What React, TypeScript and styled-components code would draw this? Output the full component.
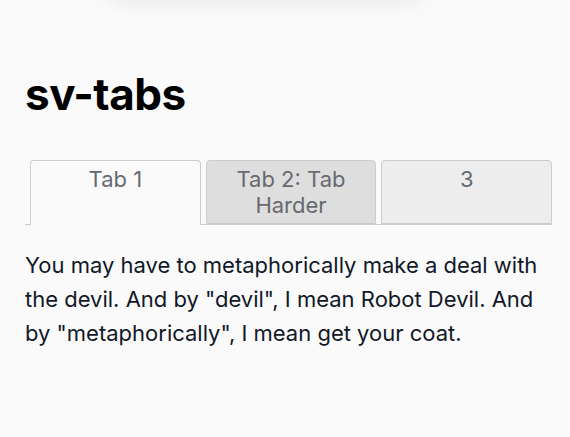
import { useState } from "react";
import styled, { createGlobalStyle } from "styled-components";

const tabs = [
  {
    label: "Tab 1",
    body: 'You may have to metaphorically make a deal with the devil. And by "devil", I mean Robot Devil. And by "metaphorically", I mean get your coat.',
  },
  { label: "Tab 2: Tab Harder", body: "Tab 2 content." },
  { label: "3", body: "Tab 3 content." },
];

export default function App() {
  const [active, setActive] = useState(0);

  return (
    <>
      <GlobalStyle />
      <TopShade />
      <Page>
        <Title>sv-tabs</Title>
        <TabList role="tablist">
          {tabs.map((t, i) => (
            <Tab
              key={i}
              role="tab"
              $index={i}
              $active={i === active}
              onClick={() => setActive(i)}
            >
              {t.label}
            </Tab>
          ))}
        </TabList>
        <Panel>{tabs[active].body}</Panel>
      </Page>
    </>
  );
}

const GlobalStyle = createGlobalStyle`
  body {
    margin: 0;
    background: #fafafa;
    font-family: Inter, "Noto Sans", sans-serif;
  }
`;

// shadow of a bar sitting just above the visible area
const TopShade = styled.div`
  position: absolute;
  top: -40px;
  left: 110px;
  width: 310px;
  height: 40px;
  box-shadow: 0 0 22px rgba(0, 0, 0, 0.09);
  background: #fafafa;
`;

const Page = styled.div`
  width: 527px;
  padding: 68px 0 0 25px;
`;

const Title = styled.h1`
  margin: 0 0 39px;
  font-size: 44px;
  font-weight: 700;
  line-height: 1.2;
  letter-spacing: -0.5px;
  color: #000;
`;

const tabBg = ["#fafafa", "#dedede", "#ededed"];

const TabList = styled.div`
  display: flex;
  border-bottom: 1px solid #cccccc;
`;

const Tab = styled.div<{ $index: number; $active: boolean }>`
  flex: 1;
  margin-left: 5px;
  margin-bottom: ${(p) => (p.$active ? "-1px" : "0")};
  padding: 5px 12px 4px;
  border: 1px solid #cccccc;
  border-bottom: ${(p) => (p.$active ? "none" : "1px solid #cccccc")};
  border-radius: 4px 4px 0 0;
  background: ${(p) => tabBg[p.$index]};
  font-size: 22px;
  line-height: 1.2;
  color: #666a70;
  text-align: center;
  cursor: pointer;
`;

const Panel = styled.div`
  padding-top: 23px;
  font-size: 22px;
  line-height: 34px;
  color: #111827;
`;
